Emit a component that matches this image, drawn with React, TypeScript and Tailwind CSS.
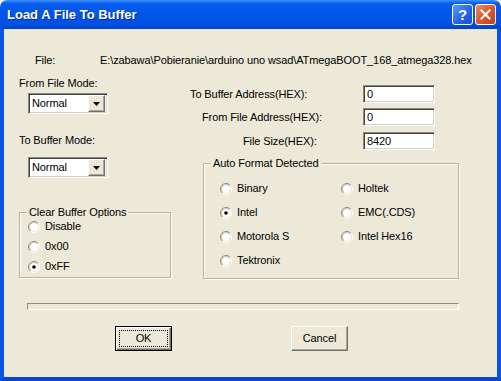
import React from "react"

function Radio({ label, checked = false }: { label: string; checked?: boolean }) {
  return (
    <div className="flex h-[13px] items-center gap-[5px]">
      <svg width="12" height="12" viewBox="0 0 12 12" className="shrink-0">
        <defs>
          <linearGradient id="rOuter" x1="0" y1="0" x2="1" y2="1">
            <stop offset="0.45" stopColor="#8c8a80" />
            <stop offset="0.55" stopColor="#ffffff" />
          </linearGradient>
          <linearGradient id="rInner" x1="0" y1="0" x2="1" y2="1">
            <stop offset="0.45" stopColor="#c4c2b6" />
            <stop offset="0.55" stopColor="#ece9d8" />
          </linearGradient>
        </defs>
        <circle cx="6" cy="6" r="5.5" fill="none" stroke="url(#rOuter)" strokeWidth="1" />
        <circle cx="6" cy="6" r="4.5" fill="#fff" stroke="url(#rInner)" strokeWidth="1" />
        {checked && <circle cx="6" cy="6" r="1.8" fill="#000" />}
      </svg>
      <span>{label}</span>
    </div>
  )
}

function Combo({ value }: { value: string }) {
  return (
    <div className="flex h-[21px] w-[80px] items-center border border-t-[#8c8a80] border-l-[#8c8a80] border-b-white border-r-white bg-white shadow-[inset_1px_1px_0_#404040,inset_-1px_-1px_0_#d4d0c8]">
      <span className="flex-1 pl-[3px]">{value}</span>
      <div className="mr-[2px] flex h-[17px] w-[17px] items-center justify-center border border-t-white border-l-white border-b-[#716f64] border-r-[#716f64] bg-[#ece9d8] shadow-[inset_-1px_-1px_0_#aca899]">
        <svg width="7" height="4" viewBox="0 0 7 4">
          <path d="M0 0h7L3.5 4z" fill="#000" />
        </svg>
      </div>
    </div>
  )
}

function Field({ value }: { value: string }) {
  return (
    <div className="flex h-[18px] w-[72px] items-center border border-t-[#8c8a80] border-l-[#8c8a80] border-b-white border-r-white bg-white pl-[3px] shadow-[inset_1px_1px_0_#404040,inset_-1px_-1px_0_#d4d0c8]">
      {value}
    </div>
  )
}

function Group({ title, className, children }: { title: string; className: string; children: React.ReactNode }) {
  return (
    <div className={"relative border border-[#b5b3a7] shadow-[inset_1px_1px_0_#fff,1px_1px_0_#fff] " + className}>
      <span className="absolute -top-[7px] left-[7px] bg-[#ece9d8] px-[2px] leading-[13px]">{title}</span>
      {children}
    </div>
  )
}

export default function App() {
  return (
    <div
      className="flex h-[381px] w-[501px] flex-col overflow-hidden text-[11px] leading-[13px] tracking-[-0.1px] text-black"
      style={{ fontFamily: '"Liberation Sans", Arial, sans-serif' }}
    >
      {/* Title bar */}
      <div className="flex h-[29px] shrink-0 items-center rounded-t-[7px] bg-[linear-gradient(to_bottom,#3d8ff9_0%,#0a5ded_12%,#0056e8_45%,#0052e2_80%,#0043cc_100%)] pl-[7px] pr-[5px]">
        <span className="flex-1 text-[13px] font-bold tracking-normal text-white [text-shadow:1px_1px_0_#0a2a9a]">
          Load A File To Buffer
        </span>
        <div className="flex gap-[2px]">
          <div className="flex h-[21px] w-[21px] items-center justify-center rounded-[3px] border border-white bg-[linear-gradient(135deg,#5b9bff,#2461e8_60%,#1a4fd8)] text-[15px] font-bold text-white">
            ?
          </div>
          <div className="flex h-[21px] w-[21px] items-center justify-center rounded-[3px] border border-white bg-[linear-gradient(135deg,#f08a64,#d9552c_55%,#c2401c)]">
            <svg width="11" height="11" viewBox="0 0 11 11">
              <path d="M1.5 1.5l8 8M9.5 1.5l-8 8" stroke="#fff" strokeWidth="2" strokeLinecap="square" />
            </svg>
          </div>
        </div>
      </div>

      {/* Body */}
      <div className="flex flex-1 flex-col border-x-4 border-b-4 border-x-[#0555e6] border-b-[#0a45d0] bg-[#ece9d8]">
        <div className="mt-[25px] flex h-[13px]">
          <span className="ml-[31px] w-[65px]">File:</span>
          <span>E:\zabawa\Pobieranie\arduino uno wsad\ATmegaBOOT_168_atmega328.hex</span>
        </div>

        <div className="mt-[9px] flex">
          {/* Left column */}
          <div className="ml-[15px] flex w-[152px] flex-col">
            <span className="mt-px">From File Mode:</span>
            <div className="ml-[9px] mt-[3px]">
              <Combo value="Normal" />
            </div>
            <span className="mt-[20px]">To Buffer Mode:</span>
            <div className="ml-[9px] mt-[10px]">
              <Combo value="Normal" />
            </div>
            <Group title="Clear Buffer Options" className="mt-[34px] flex h-[66px] flex-col gap-[7px] pl-[8px] pt-[7px]">
              <Radio label="Disable" />
              <Radio label="0x00" />
              <Radio label="0xFF" checked />
            </Group>
          </div>

          {/* Right column */}
          <div className="ml-[19px] flex w-[268px] flex-col">
            <div className="mt-[9px] flex items-center">
              <span className="w-[173px]">To Buffer Address(HEX):</span>
              <Field value="0" />
            </div>
            <div className="mt-[5px] flex items-center">
              <span className="w-[173px] pl-[12px]">From File Address(HEX):</span>
              <Field value="0" />
            </div>
            <div className="mt-[6px] flex items-center">
              <span className="w-[173px] pl-[53px]">File Size(HEX):</span>
              <Field value="8420" />
            </div>
            <Group title="Auto Format Detected" className="ml-[13px] mt-[13px] h-[116px] w-[256px] pl-[16px] pt-[18px]">
              <div className="grid grid-cols-[121px_1fr] gap-y-[11px]">
                <Radio label="Binary" />
                <Radio label="Holtek" />
                <Radio label="Intel" checked />
                <Radio label="EMC(.CDS)" />
                <Radio label="Motorola S" />
                <Radio label="Intel Hex16" />
                <Radio label="Tektronix" />
              </div>
            </Group>
          </div>
        </div>

        {/* Progress bar */}
        <div className="ml-[23px] mt-[24px] h-[7px] w-[432px] border border-t-[#8c8a80] border-l-[#8c8a80] border-b-white border-r-white" />

        {/* Buttons */}
        <div className="ml-[111px] mt-[16px] flex gap-[119px]">
          <button className="flex h-[25px] w-[57px] items-center justify-center border border-black bg-[#ece9d8] p-[3px] shadow-[inset_1px_1px_0_#fff,inset_-1px_-1px_0_#716f64,inset_-2px_-2px_0_#aca899]">
            <span className="flex h-full w-full items-center justify-center border border-dotted border-black">OK</span>
          </button>
          <button className="flex h-[25px] w-[57px] items-center justify-center border border-t-white border-l-white border-b-[#716f64] border-r-[#716f64] bg-[#ece9d8] shadow-[inset_-1px_-1px_0_#aca899]">
            Cancel
          </button>
        </div>
      </div>
    </div>
  )
}
